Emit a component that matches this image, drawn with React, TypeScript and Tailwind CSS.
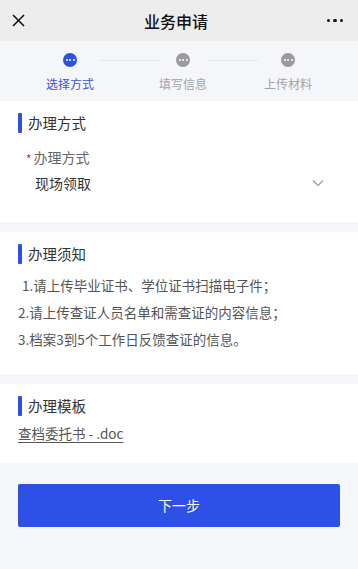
import React from "react";

const steps = [
  { label: "选择方式", active: true },
  { label: "填写信息", active: false },
  { label: "上传材料", active: false },
];

function StepDot({ active }: { active: boolean }) {
  return (
    <div
      className={`w-[14px] h-[14px] rounded-full flex items-center justify-center gap-[1.5px] ${
        active ? "bg-[#2f50e6]" : "bg-[#9b9b9d]"
      }`}
    >
      <span className="w-[2px] h-[2px] rounded-full bg-white" />
      <span className="w-[2px] h-[2px] rounded-full bg-white" />
      <span className="w-[2px] h-[2px] rounded-full bg-white" />
    </div>
  );
}

function Step({ label, active }: { label: string; active: boolean }) {
  return (
    <div className="w-[46px] flex flex-col items-center">
      <StepDot active={active} />
      <span
        className={`mt-[8px] text-[12px] leading-[18px] whitespace-nowrap ${
          active ? "text-[#3a55d6]" : "text-[#a3a3a6]"
        }`}
      >
        {label}
      </span>
    </div>
  );
}

function SectionTitle({ children }: { children: React.ReactNode }) {
  return (
    <div className="flex items-center h-[20px]">
      <span className="w-[4px] h-[20px] bg-[#2f50e6] rounded-[1px]" />
      <span className="ml-[6px] text-[14.5px] text-[#333]">{children}</span>
    </div>
  );
}

export default function App() {
  return (
    <div
      className="w-[358px] min-h-[569px] bg-[#f5f6fa]"
      style={{ fontFamily: '"Noto Sans CJK SC", "Noto Sans", "Liberation Sans", sans-serif' }}
    >
      {/* Header */}
      <div className="h-[41px] bg-[#ededed] flex items-center justify-between px-[12px]">
        <svg width="13" height="13" viewBox="0 0 13 13" fill="none" stroke="#111" strokeWidth="1.6">
          <line x1="1" y1="1" x2="12" y2="12" />
          <line x1="12" y1="1" x2="1" y2="12" />
        </svg>
        <span className="text-[16px] font-medium text-[#111]">业务申请</span>
        <div className="flex items-center gap-[3px] w-[16px] mr-[3px]">
          <span className="w-[3.5px] h-[3.5px] rounded-full bg-[#111]" />
          <span className="w-[3.5px] h-[3.5px] rounded-full bg-[#111]" />
          <span className="w-[3.5px] h-[3.5px] rounded-full bg-[#111]" />
        </div>
      </div>

      {/* Steps */}
      <div className="h-[60px] pt-[12px] pl-[47px] flex items-start">
        <Step {...steps[0]} />
        <span className="ml-[7px] w-[60px] h-[1px] mt-[7px] bg-[#e6e7ec]" />
        <Step {...steps[1]} />
        <span className="ml-[2px] mr-[7px] w-[50px] h-[1px] mt-[7px] bg-[#e6e7ec]" />
        <Step {...steps[2]} />
      </div>

      {/* 办理方式 */}
      <div className="bg-white pt-[12px] px-[18px] h-[121px]">
        <SectionTitle>办理方式</SectionTitle>
        <div className="mt-[14px] pl-[8px] flex items-center text-[14px] leading-[20px] text-[#666]">
          <span className="text-[#d9263f] text-[12px] leading-[12px] mt-[4px] mr-[2px]">*</span>
          <span>办理方式</span>
        </div>
        <div className="mt-[6px] pl-[17px] pr-[16px] flex items-center justify-between">
          <span className="text-[14px] leading-[20px] text-[#333]">现场领取</span>
          <svg width="12" height="8" viewBox="0 0 12 8" fill="none" stroke="#999" strokeWidth="1.2">
            <polyline points="1,1.5 6,6.5 11,1.5" />
          </svg>
        </div>
      </div>

      {/* 办理须知 */}
      <div className="mt-[10px] bg-white pt-[12px] px-[18px] h-[142px]">
        <SectionTitle>办理须知</SectionTitle>
        <div className="mt-[8px] text-[13.5px] leading-[27px] text-[#555]">
          <p className="pl-[4px]">1.请上传毕业证书、学位证书扫描电子件；</p>
          <p>2.请上传查证人员名单和需查证的内容信息；</p>
          <p>3.档案3到5个工作日反馈查证的信息。</p>
        </div>
      </div>

      {/* 办理模板 */}
      <div className="mt-[10px] bg-white pt-[12px] px-[18px] h-[79px]">
        <SectionTitle>办理模板</SectionTitle>
        <a className="block mt-[7px] text-[13.5px] leading-[20px] text-[#555] underline underline-offset-[3px]">
          查档委托书 - .doc
        </a>
      </div>

      {/* Button */}
      <div className="px-[18px] pt-[21px]">
        <button className="w-full h-[43px] rounded-[2px] bg-[#2f50e6] text-white text-[14px]">
          下一步
        </button>
      </div>
    </div>
  );
}
